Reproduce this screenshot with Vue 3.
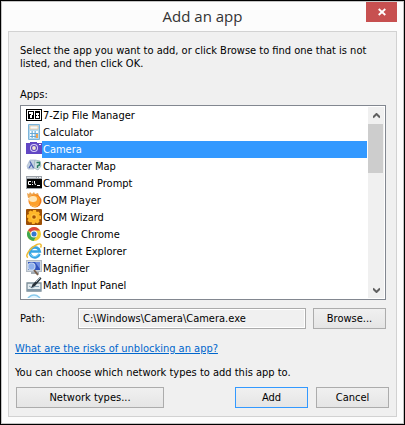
<script setup>
import { ref } from 'vue'

const apps = [
  { name: '7-Zip File Manager', icon: 'zip' },
  { name: 'Calculator', icon: 'calc' },
  { name: 'Camera', icon: 'camera' },
  { name: 'Character Map', icon: 'charmap' },
  { name: 'Command Prompt', icon: 'cmd' },
  { name: 'GOM Player', icon: 'gom' },
  { name: 'GOM Wizard', icon: 'wizard' },
  { name: 'Google Chrome', icon: 'chrome' },
  { name: 'Internet Explorer', icon: 'ie' },
  { name: 'Magnifier', icon: 'magnifier' },
  { name: 'Math Input Panel', icon: 'math' },
  { name: '', icon: 'next' },
]
const selected = ref('Camera')
const path = ref('C:\\Windows\\Camera\\Camera.exe')
</script>

<template>
  <main class="window">
    <header class="titlebar">
      <h1>Add an app</h1>
      <button class="close" type="button" aria-label="Close">
        <svg width="8" height="8" viewBox="0 0 8 8"><path d="M.7 1 7.3 7M7.3 1 .7 7" stroke="#fff" stroke-width="1.8" /></svg>
      </button>
    </header>

    <form class="panel" @submit.prevent>
      <div class="upper">
        <p class="intro">Select the app you want to add, or click Browse to find one that is not listed, and then click OK.</p>
        <div id="apps-label" class="apps-label">Apps:</div>
        <div class="listbox">
          <ul role="listbox" aria-labelledby="apps-label">
            <li
              v-for="app in apps"
              :key="app.icon"
              role="option"
              :aria-selected="app.name === selected"
              :class="{ selected: app.name === selected }"
              @click="selected = app.name"
            >
              <svg class="icon" width="16" height="16" viewBox="0 0 16 16" aria-hidden="true">
                <g v-if="app.icon === 'zip'">
                  <rect y="2" width="16" height="12" fill="#000" />
                  <rect x="1" y="3" width="14" height="10" fill="#fff" />
                  <rect x="2" y="4" width="6" height="8" fill="#000" />
                  <rect x="9" y="4" width="5" height="8" fill="#000" />
                  <path d="M3 5h4v3H6v3H4V8h1V7H3zM10 6h3v2h-1v1h1v2h-3V9h1V8h-1z" fill="#fff" />
                </g>
                <g v-else-if="app.icon === 'calc'">
                  <rect x="2" y="0" width="12" height="16" rx="1" fill="#7db4da" />
                  <rect x="3" y="1" width="10" height="14" fill="#b5daf2" />
                  <rect x="4" y="2" width="8" height="3" fill="#f4fbff" stroke="#f0b878" stroke-width=".6" />
                  <path d="M4 7h2v2H4zM7 7h2v2H7zM4 10h2v2H4zM7 10h2v2H7zM4 13h2v1H4zM7 13h2v1H7zM10 7h2v2h-2z" fill="#fff" />
                  <path d="M6 7v7M9 7v7M4 9.500h8M4 12.500h8" fill="none" stroke="#5c9fd0" stroke-width=".8" />
                  <rect x="10" y="10" width="2" height="4" fill="#f0a253" />
                </g>
                <g v-else-if="app.icon === 'camera'">
                  <path d="M0 2h4V1h7v1h5v11H0z" fill="#6247c4" />
                  <circle cx="8" cy="7" r="4" fill="#d9d0f7" />
                  <circle cx="8" cy="7" r="3" fill="#5b3fbd" />
                  <circle cx="8" cy="7" r="1.900" fill="#efe6d0" />
                  <path d="M13 3h2v1h-2z" fill="#fff" />
                </g>
                <g v-else-if="app.icon === 'charmap'">
                  <path d="M4 2 9 2 8 11 2 11 1 8z" fill="#c5d2e2" stroke="#a3b5cc" stroke-width=".7" />
                  <path d="M9 2 14 3 15 8 12 12 8 10z" fill="#d3e2e4" stroke="#93aab8" stroke-width=".7" />
                  <path d="M3 10 5.500 6M4 3.500 7.500 10" fill="none" stroke="#4c63b0" stroke-width="1.300" />
                  <path d="M10.500 4.500h3v2.500l-2 1v2" fill="none" stroke="#2b7d63" stroke-width="1.400" />
                </g>
                <g v-else-if="app.icon === 'cmd'">
                  <rect y="1" width="16" height="13" fill="#9da3aa" />
                  <path d="M1 2h9v1H1z" fill="#d6dade" />
                  <path d="M11 2h1v1h-1zM13 2h2v1h-2z" fill="#f2f2f2" />
                  <rect x="1" y="4" width="15" height="9" fill="#050505" />
                  <path d="M5 6.500H2.500V9.500H5M6 7h1M6 9.500h1M8.500 6v2l1 2M11 10.500h3" fill="none" stroke="#fff" />
                </g>
                <g v-else-if="app.icon === 'gom'">
                  <path d="M1 1 3 2 4 0 6 2 8 0 9 2 12 1 13 4 2 6z" fill="#eda651" />
                  <circle cx="9" cy="9" r="6.500" fill="#ef7814" />
                  <circle cx="8.500" cy="8.500" r="5.500" fill="#fda02c" />
                  <ellipse cx="7" cy="7" rx="4" ry="3" fill="#ffe5b5" />
                  <path d="M4 12c3 2.500 6 2.500 9 0-2 4-7 4-9 0" fill="#ffc45d" />
                </g>
                <g v-else-if="app.icon === 'wizard'">
                  <rect width="16" height="16" rx="1" fill="#9c5008" />
                  <path d="m7 1 3 0 .5 2 2-.5 1.500 2-1 1.500 2 1v3l-2 .5.500 2-2 2-2-1-1 1.500H6l-.5-2-2 .5-2-2 1-2-1.500-1V6l2-1-.5-2 2-1.500 2 1z" fill="#ffb629" />
                  <circle cx="8" cy="8" r="3" fill="#ffc540" />
                  <circle cx="8" cy="8" r="1.800" fill="#a65206" />
                </g>
                <g v-else-if="app.icon === 'chrome'">
                  <circle cx="8" cy="8" r="7" fill="#f2cf33" />
                  <path d="M8 8 2 4.400A7 7 0 0 1 14.100 4.600L8 4.600z" fill="#d9453d" />
                  <path d="M2 4.400A7 7 0 0 0 7.500 15L10.500 10 8 8 5 9z" fill="#3da653" />
                  <circle cx="8" cy="8" r="3.500" fill="#f6f6f6" />
                  <circle cx="8" cy="8" r="2.500" fill="#3578cf" />
                </g>
                <g v-else-if="app.icon === 'ie'">
                  <path d="M13.500 11A5 5 0 1 1 13.700 8.500H5" fill="none" stroke="#37a5e4" stroke-width="2.700" />
                  <path d="M13 10.500A5 5 0 0 1 4 11" fill="none" stroke="#7ccff6" />
                  <path d="M2 14.500C-2 13 5 4 11 1.500c4-1.700 5 .5 3.500 3" fill="none" stroke="#eebb35" stroke-width="1.500" />
                </g>
                <g v-else-if="app.icon === 'magnifier'">
                  <rect x="0.500" y="0.500" width="15" height="11" fill="#d1d8df" stroke="#b3bcc6" />
                  <rect x="2" y="2" width="12" height="8" fill="#3154bd" />
                  <path d="M9 2h5v7z" fill="#6f8ee0" />
                  <path d="M5 12h8v2H5z" fill="#a4adb5" />
                  <path d="m8 10 4 5" stroke="#79604e" stroke-width="2" />
                  <circle cx="5.500" cy="6.500" r="3.500" fill="#8fb0ec" stroke="#c3d5ef" stroke-width="1.200" />
                </g>
                <g v-else-if="app.icon === 'math'">
                  <path d="M1 6h14v8H1z" fill="#e5edf1" stroke="#7b8d98" stroke-width="1.300" />
                  <path d="M1 12h14v2H1z" fill="#8298a8" />
                  <path d="m3 9 3 2 3-1.500h4" fill="none" stroke="#8aa5b7" />
                  <path d="m5 11 1.500-3.500L14 0l1.500 1.500L9 9z" fill="#28323a" />
                  <path d="m10 5 4-4" stroke="#a0b4c1" />
                </g>
                <g v-else>
                  <circle cx="8" cy="8" r="7" fill="#e2f4fd" stroke="#88c9eb" stroke-width="1.500" />
                </g>
              </svg>
              <span class="name">{{ app.name }}</span>
            </li>
          </ul>
          <div class="scrollbar">
            <button type="button" aria-label="Scroll up">
              <svg width="7" height="6" viewBox="0 0 7 6"><path d="M0 4.500 3.500 1 7 4.500" fill="none" stroke="#606060" stroke-width="2" /></svg>
            </button>
            <div class="thumb"></div>
            <button class="down" type="button" aria-label="Scroll down">
              <svg width="7" height="6" viewBox="0 0 7 6"><path d="M0 1.500 3.500 5 7 1.500" fill="none" stroke="#606060" stroke-width="2" /></svg>
            </button>
          </div>
        </div>
        <div class="path-row">
          <label for="path">Path:</label>
          <input id="path" v-model="path" type="text" readonly />
          <button class="btn" type="button">Browse...</button>
        </div>
      </div>

      <div class="lower">
        <a href="#risks">What are the risks of unblocking an app?</a>
        <p>You can choose which network types to add this app to.</p>
      </div>
      <footer class="actions">
        <button class="btn network" type="button">Network types...</button>
        <button class="btn default" type="submit">Add</button>
        <button class="btn" type="button">Cancel</button>
      </footer>
    </form>
  </main>
</template>

<style>
body { margin: 0; background: #fcfcfc; }
</style>

<style scoped>
.window {
  box-sizing: border-box;
  border: 1px solid #000;
  box-shadow: inset 0 0 0 1px #c4c4c4;
  padding: 1px 7px 7px;
  background: #fcfcfc;
  color: #000;
  font: 11px/13px "DejaVu Sans Condensed", "Noto Sans", sans-serif;
}
.titlebar {
  display: grid;
  grid-template-columns: 31px 1fr 31px;
  align-items: start;
  height: 29px;
}
h1 {
  grid-column: 2;
  margin: 0;
  text-align: center;
  font: 15px/29px "Open Sans", sans-serif;
  color: #333;
}
.close {
  display: flex;
  align-items: center;
  justify-content: center;
  height: 20px;
  border: 0;
  padding: 0;
  background: #c75050;
}
.panel {
  border: 1px solid #d2d2d2;
  padding: 12px 7px 8px 6px;
  background: #f0f0f0;
}
.upper { padding: 0 3px 0 5px; }
p { margin: 0; }
.apps-label { margin-top: 18px; }
.listbox {
  display: flex;
  box-sizing: border-box;
  height: 195px;
  margin-top: 4px;
  border: 1px solid #828790;
  padding: 1px;
  background: #fff;
}
ul {
  flex: 1;
  overflow: hidden;
  margin: 0;
  padding: 0 1px 0 4px;
  list-style: none;
}
li { display: flex; height: 17px; }
.icon { flex: none; }
.name { flex: 1; padding: 0 1px; line-height: 17px; }
.selected .name { background: #3399ff; color: #fff; }
.scrollbar {
  display: flex;
  flex-direction: column;
  width: 16px;
  background: #f0f0f0;
}
.scrollbar button {
  display: flex;
  align-items: center;
  justify-content: center;
  height: 17px;
  border: 0;
  padding: 0;
  background: none;
}
.thumb { height: 49px; margin-right: 1px; background: #cdcdcd; }
.down { margin-top: auto; }
.path-row { display: flex; align-items: center; margin-top: 8px; }
.path-row label { width: 58px; }
.path-row input {
  flex: 1;
  min-width: 0;
  box-sizing: border-box;
  height: 21px;
  margin-right: 7px;
  border: 1px solid #ababab;
  padding: 0 4px;
  box-shadow: inset 0 0 0 1px #fff;
  background: #f0f0f0;
  color: #000;
  font: inherit;
}
.btn {
  box-sizing: border-box;
  width: 73px;
  height: 21px;
  border: 1px solid #acacac;
  padding: 0;
  background: linear-gradient(#f0f0f0, #e5e5e5);
  color: #000;
  font: inherit;
}
.lower { display: grid; gap: 11px; margin-top: 13px; }
.lower a { justify-self: start; color: #0066cc; text-underline-offset: 1px; }
.actions { display: flex; gap: 8px; margin-top: 8px; padding-left: 1px; }
.network { width: 148px; margin-right: auto; }
.default { border-color: #3399ff; }
</style>
